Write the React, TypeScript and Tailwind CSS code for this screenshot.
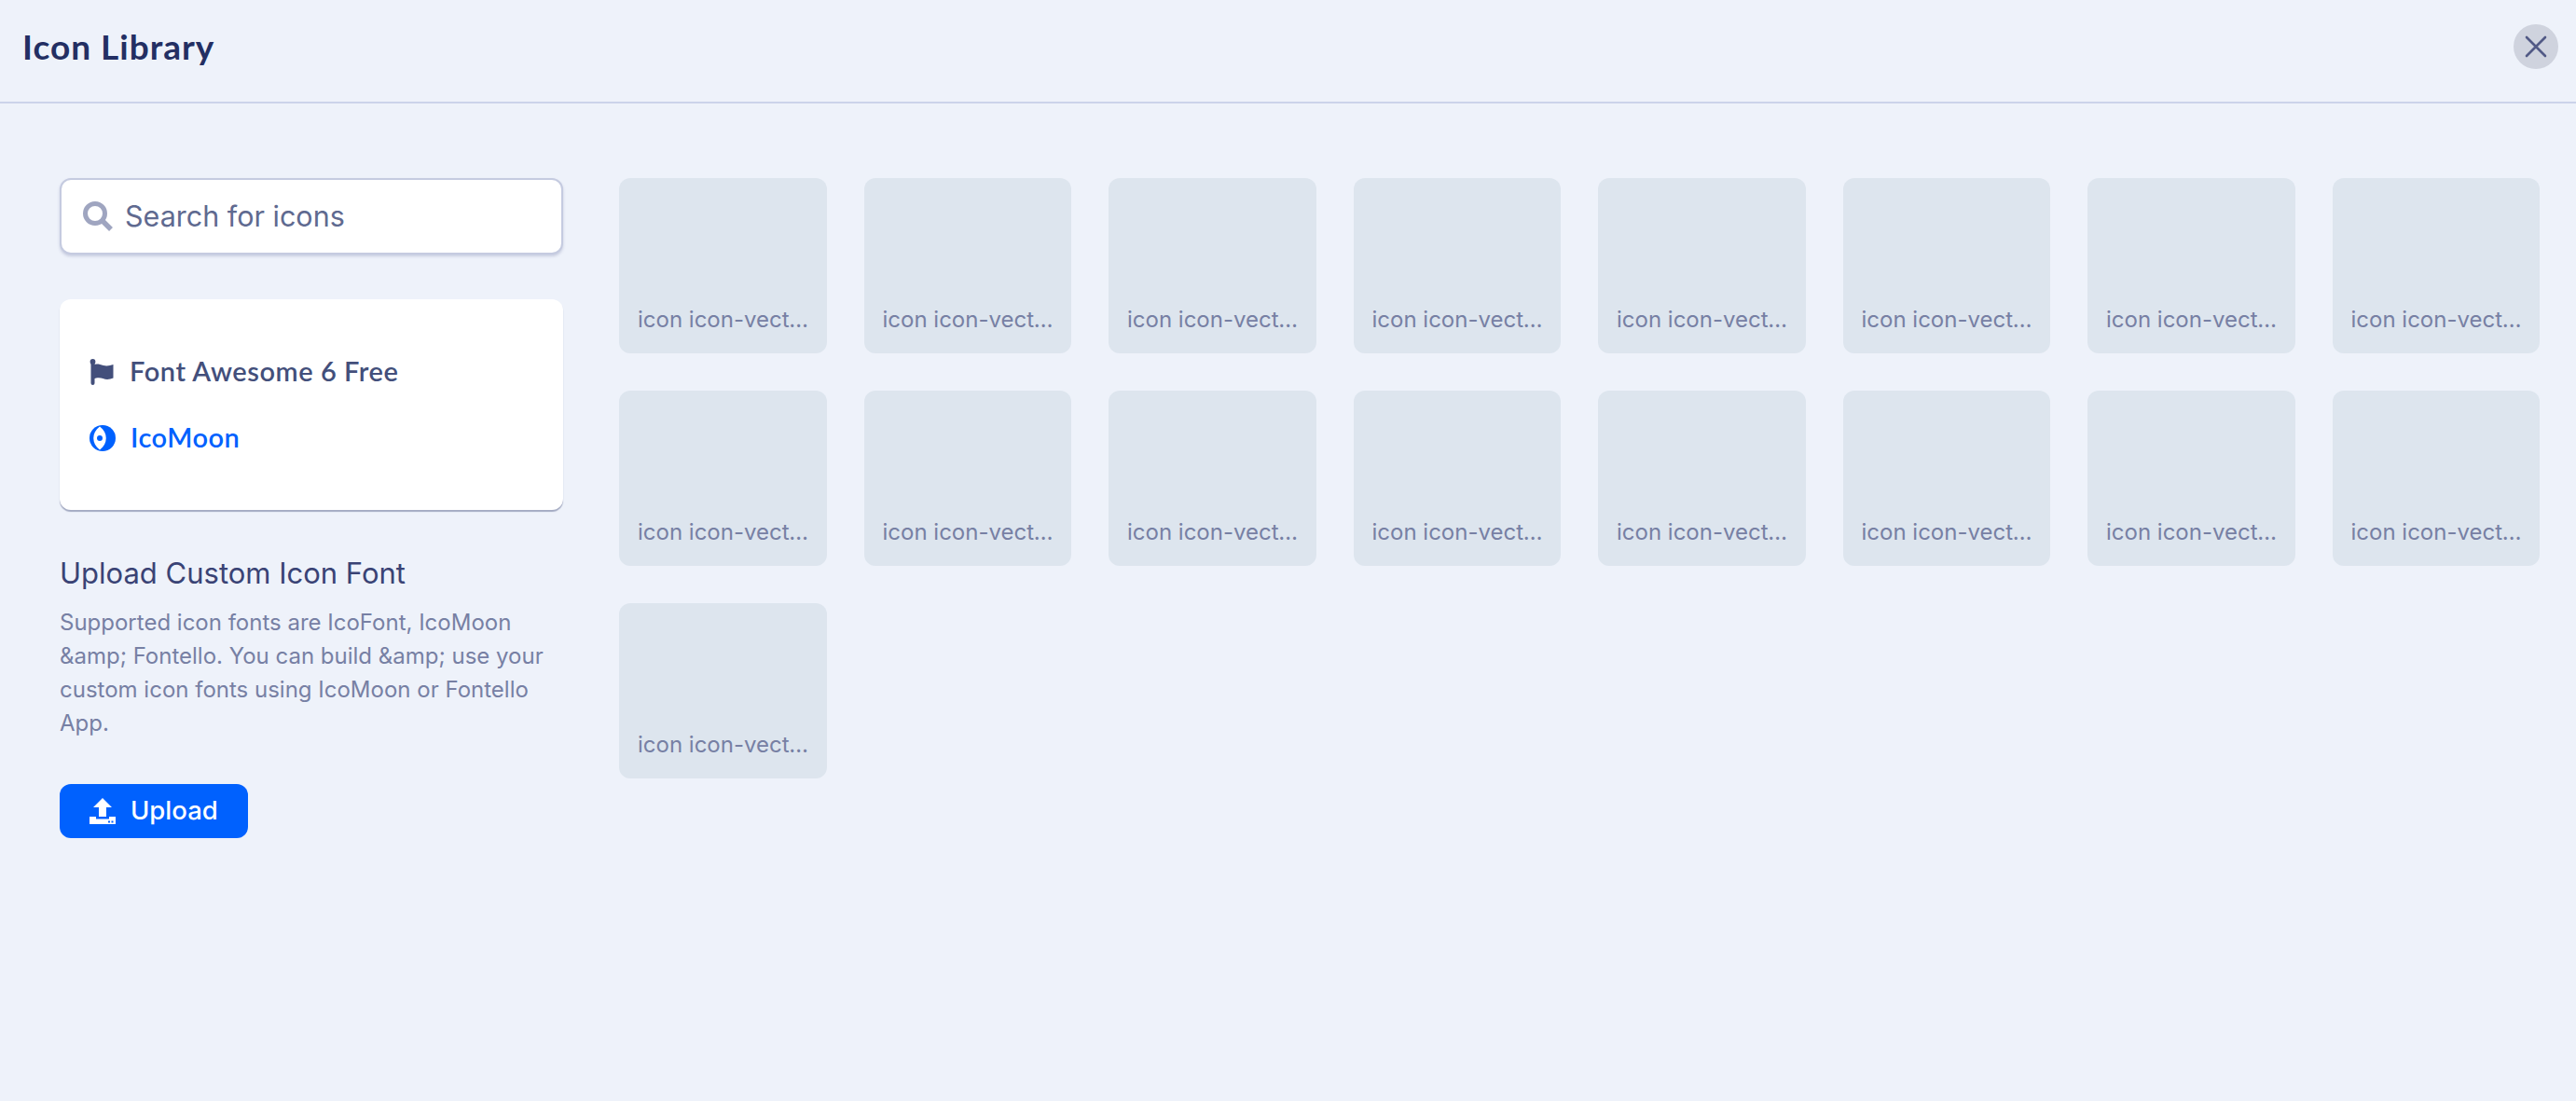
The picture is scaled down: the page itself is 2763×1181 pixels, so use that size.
const tiles = Array.from({ length: 17 }, (_, i) => i);

function SearchIcon() {
  return (
    <svg width="34" height="34" viewBox="0 0 34 34" fill="none" className="shrink-0">
      <circle cx="14" cy="14" r="10.5" stroke="#9fa5c0" strokeWidth="5" />
      <path d="M22 22 L31 31" stroke="#9fa5c0" strokeWidth="5.5" />
    </svg>
  );
}

function FlagIcon() {
  return (
    <svg width="26" height="28" viewBox="0 0 26 28" className="shrink-0">
      <circle cx="3.5" cy="3" r="2.9" fill="#434f7b" />
      <rect x="1.5" y="3" width="4" height="25" rx="2" fill="#434f7b" />
      <path d="M4 6 C8 5 11 5.5 15 7 C19 8 22 7 25.5 6 L25.5 20.5 C22 22 18 22.5 14.5 21 C11 20 8 20 4 21.5 Z" fill="#434f7b" />
    </svg>
  );
}

function MoonIcon() {
  return (
    <svg width="28" height="28" viewBox="0 0 28 28" className="shrink-0">
      <circle cx="14" cy="14" r="14" fill="#0061fe" />
      <path d="M11 1.5 C2 8 2 20 11 26.5 C20 20 20 8 11 1.5 Z" fill="#fff" />
      <circle cx="11" cy="14" r="3" fill="#0061fe" />
    </svg>
  );
}

function UploadIcon() {
  return (
    <svg width="28" height="28" viewBox="0 0 28 28" className="shrink-0">
      <path d="M14 0 L24 10 L18 10 L18 20 L10 20 L10 10 L4 10 Z" fill="#fff" />
      <path d="M0 20 L7 20 L7 22.5 L21 22.5 L21 20 L28 20 L28 28 L0 28 Z" fill="#fff" />
      <rect x="20" y="24.5" width="2" height="2" fill="#0061fe" />
      <rect x="23.5" y="24.5" width="2" height="2" fill="#0061fe" />
    </svg>
  );
}

export default function App() {
  return (
    <div className="w-full h-[1181px] bg-[#eef2fa] overflow-hidden font-['Inter',sans-serif]">
      <header className="h-[111px] border-b-2 border-[#ccd3ea] flex items-start justify-between pt-[26px] pl-[24px] pr-[19px]">
        <h1 className="font-['Lato',sans-serif] font-bold text-[37px] leading-[48px] tracking-[1px] text-[#232f63]">Icon Library</h1>
        <button className="w-12 h-12 rounded-full bg-[#cfd3de] flex items-center justify-center">
          <svg width="24" height="24" viewBox="0 0 24 24" fill="none">
            <path d="M2 2 L22 22 M22 2 L2 22" stroke="#525a86" strokeWidth="2.6" strokeLinecap="round" />
          </svg>
        </button>
      </header>
      <main className="flex pt-[80px] pl-[64px] pr-[39px] gap-[60px]">
        <aside className="w-[540px] shrink-0">
          <div className="h-[82px] bg-white rounded-xl border-2 border-[#c5cbe0] shadow-[0_2px_3px_rgba(90,100,150,0.25)] flex items-center pl-[22px] gap-[12px]">
            <SearchIcon />
            <span className="text-[30.5px] text-[#5f6a90]">Search for icons</span>
          </div>
          <div className="mt-[48px] h-[226px] bg-white rounded-xl shadow-[0_2px_1px_rgba(90,100,140,0.5)] flex flex-col justify-center gap-[43px] pl-[32px]">
            <div className="flex items-center gap-[17px] h-[28px]">
              <FlagIcon />
              <span className="font-['Lato',sans-serif] font-semibold text-[29px] leading-[34px] tracking-[0.55px] pb-[2px] text-[#434f7b]">Font Awesome 6 Free</span>
            </div>
            <div className="flex items-center gap-[16px] h-[28px]">
              <MoonIcon />
              <span className="font-['Lato',sans-serif] font-semibold text-[29px] leading-[34px] tracking-[0.5px] pb-[2px] text-[#0061fe]">IcoMoon</span>
            </div>
          </div>
          <h2 className="mt-[48px] text-[31px] leading-[40px] text-[#3a4375]">Upload Custom Icon Font</h2>
          <p className="mt-[15px] text-[24px] leading-[36px] text-[#7780a4]">
            Supported icon fonts are IcoFont, IcoMoon &amp;amp; Fontello. You can build &amp;amp; use your custom icon fonts using IcoMoon or Fontello App.
          </p>
          <button className="mt-[47px] w-[202px] h-[58px] rounded-xl bg-[#0061fe] flex items-center pl-[32px] gap-[16px] text-white text-[27.5px] font-medium">
            <UploadIcon />
            <span>Upload</span>
          </button>
        </aside>
        <section className="flex-1 grid grid-cols-8 gap-[40px] content-start">
          {tiles.map((i) => (
            <div key={i} className="h-[188px] rounded-xl bg-[#dde5ee] flex items-end pl-[20px] pr-[17px] pb-[18px]">
              <span className="block w-full truncate text-[24px] leading-[36px] text-[#7780a4]">icon icon-vector-font</span>
            </div>
          ))}
        </section>
      </main>
    </div>
  );
}
